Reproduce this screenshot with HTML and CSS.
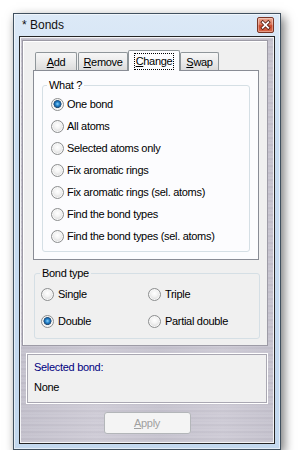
FILE: index.html
```html
<!DOCTYPE html>
<html>
<head>
<meta charset="utf-8">
<link rel="stylesheet" href="styles.css">
</head>
<body>
<div class="window">
  <div class="titlebar">
    <span class="title">* Bonds</span>
    <span class="close">
      <svg width="16" height="16" viewBox="0 0 16 16">
        <path d="M5 5 L11 11 M11 5 L5 11" stroke="#5a2418" stroke-width="3.6" stroke-linecap="square"/>
        <path d="M5 5 L11 11 M11 5 L5 11" stroke="#ffffff" stroke-width="1.8" stroke-linecap="square"/>
      </svg>
    </span>
  </div>
  <div class="client">
    <div class="top-panel">
      <div class="tabs">
        <div class="tab tab-add"><u>A</u>dd</div>
        <div class="tab tab-remove"><u>R</u>emove</div>
        <div class="tab tab-active"><span class="focus"><u>C</u>hange</span></div>
        <div class="tab tab-swap"><u>S</u>wap</div>
      </div>
      <div class="tab-page">
        <fieldset class="group what">
          <legend>What ?</legend>
          <div class="radio"><span class="dot checked"></span><span>One bond</span></div>
          <div class="radio"><span class="dot"></span><span>All atoms</span></div>
          <div class="radio"><span class="dot"></span><span>Selected atoms only</span></div>
          <div class="radio"><span class="dot"></span><span>Fix aromatic rings</span></div>
          <div class="radio"><span class="dot"></span><span>Fix aromatic rings (sel. atoms)</span></div>
          <div class="radio"><span class="dot"></span><span>Find the bond types</span></div>
          <div class="radio"><span class="dot"></span><span>Find the bond types (sel. atoms)</span></div>
        </fieldset>
      </div>
      <fieldset class="group bondtype">
        <legend>Bond type</legend>
        <div class="bond-grid">
          <div class="radio"><span class="dot"></span><span>Single</span></div>
          <div class="radio"><span class="dot"></span><span>Triple</span></div>
          <div class="radio"><span class="dot checked"></span><span>Double</span></div>
          <div class="radio"><span class="dot"></span><span>Partial double</span></div>
        </div>
      </fieldset>
    </div>
    <div class="info-panel">
      <div class="info-label">Selected bond:</div>
      <div class="info-value">None</div>
    </div>
    <div class="actions">
      <button class="apply" disabled><u>A</u>pply</button>
    </div>
  </div>
</div>
</body>
</html>
```

FILE: styles.css
```css
* { box-sizing: border-box; }

html, body {
  margin: 0;
  padding: 0;
  background: #ffffff;
}

body {
  font-family: "Liberation Sans", Arial, sans-serif;
  font-size: 11px;
  letter-spacing: -0.3px;
  color: #000;
}

.window {
  margin: 13px 0 0 13px;
  width: 268px;
  height: 437px;
  border: 1px solid #40505f;
  background: linear-gradient(180deg, #dce9f7 0%, #c9ddf1 30%, #c3d8ee 100%);
  box-shadow: 3px 4px 10px rgba(0, 0, 0, 0.55), inset 0 0 0 1px rgba(255, 255, 255, 0.55);
  padding: 0 5px 5px 5px;
  display: flex;
  flex-direction: column;
}

.titlebar {
  height: 22px;
  display: flex;
  align-items: flex-start;
  justify-content: space-between;
  flex: none;
}

.title {
  font-size: 12px;
  letter-spacing: 0;
  padding: 4px 0 0 3px;
  color: #111;
}

.close {
  margin-top: 3px;
  margin-right: 1px;
  width: 17px;
  height: 16px;
  border: 1px solid #7a3626;
  border-radius: 2px;
  background: linear-gradient(180deg, #eba690 0%, #dc7a5f 45%, #c9472a 55%, #d9694a 100%);
  box-shadow: inset 0 0 0 1px rgba(255, 255, 255, 0.35);
  display: flex;
  align-items: center;
  justify-content: center;
}

.close svg { display: block; }

.client {
  flex: 1;
  border: 1px solid #252525;
  box-shadow: inset 0 0 0 1px #f4f4f6;
  background:
    repeating-linear-gradient(180deg,
      rgba(255,255,255,0.00) 0px,
      rgba(255,255,255,0.18) 1px,
      rgba(255,255,255,0.00) 2px,
      rgba(0,0,0,0.03) 3px,
      rgba(255,255,255,0.10) 5px,
      rgba(255,255,255,0.00) 7px),
    linear-gradient(90deg, #c2bfcb 0%, #cdcad5 30%, #c4c1cd 55%, #ccc9d4 80%, #c3c0cc 100%);
  padding: 3px 0 0 2px;
  display: flex;
  flex-direction: column;
}

.top-panel {
  width: 246px;
  height: 306px;
  background: #f0f0f0;
  border: 1px solid #9d9ba6;
  box-shadow: inset 1px 1px 0 #ffffff;
  padding: 9px 0 0 10px;
  display: flex;
  flex-direction: column;
}

.tabs {
  display: flex;
  align-items: flex-end;
  height: 21px;
  margin-bottom: -1px;
  position: relative;
  z-index: 1;
}

.tab {
  height: 18px;
  border: 1px solid #8f969a;
  border-bottom: none;
  border-radius: 2px 2px 0 0;
  background: linear-gradient(180deg, #f7f7f7 0%, #ebebeb 50%, #dcdcdc 100%);
  display: flex;
  align-items: center;
  justify-content: center;
  margin-bottom: 1px;
}

.tab-add { width: 42px; margin-left: 2px; }
.tab-remove { width: 50px; margin-left: 1px; }
.tab-swap { width: 39px; margin-left: 0; }

.tab-active {
  width: 52px;
  height: 21px;
  background: #fcfcfe;
  margin-bottom: 0;
  margin-left: 0;
}

.focus {
  border: 1px dotted #000;
  padding: 1px 1px 2px 1px;
  line-height: 12px;
}

.tab-page {
  width: 226px;
  height: 190px;
  border: 1px solid #898c95;
  background: #fcfcfe;
  padding: 8px 0 0 8px;
}

.group {
  margin: 0;
  border: 1px solid #d5dfe5;
  border-radius: 3px;
  min-width: 0;
}

.group legend {
  padding: 0 2px;
  line-height: 13px;
  color: #000;
}

.what {
  width: 208px;
  height: 173px;
  padding: 1px 0 0 8px;
}

.what legend { margin-left: -4px; }

.radio {
  height: 22px;
  display: flex;
  align-items: center;
  gap: 3px;
  white-space: nowrap;
}

.dot {
  flex: none;
  width: 13px;
  height: 13px;
  border-radius: 50%;
  border: 1px solid #8c8e8f;
  background: radial-gradient(circle at 50% 40%, #ffffff 0px, #f4f4f4 3px, #dedede 6px, #e9e9e9 7px);
  box-shadow: inset 0 0 0 1px #f8f8f8;
}

.dot.checked {
  background: radial-gradient(circle at 50% 45%, #8fd4fb 0px, #2b8ad0 1.8px, #185f9f 3px, #2b4d6e 3.8px, #ececec 4.3px, #f6f6f6 6px);
}

.bondtype {
  width: 226px;
  height: 72px;
  margin: 7px 0 0 1px;
  padding: 3px 0 0 6px;
}

.bondtype legend { margin-left: -1px; }

.bond-grid {
  display: grid;
  grid-template-columns: 107px auto;
  row-gap: 5px;
}

.bond-grid .radio { gap: 4px; }

.info-panel {
  margin: 7px 0 0 4px;
  width: 242px;
  height: 51px;
  background: #f0f0f0;
  border: 1px solid #ffffff;
  box-shadow: inset 0 0 0 1px #a9a7b2;
  padding: 7px 0 0 7px;
  display: flex;
  flex-direction: column;
  gap: 7px;
}

.info-label { color: #000080; line-height: 13px; }
.info-value { line-height: 13px; }

.actions {
  display: flex;
  justify-content: center;
  padding: 8px 2px 0 0;
}

.apply {
  width: 87px;
  height: 22px;
  border: 1px solid #b3b6b9;
  border-radius: 3px;
  background: #f4f4f4;
  color: #a0a0a0;
  font-family: "Liberation Sans", Arial, sans-serif;
  font-size: 11px;
  letter-spacing: -0.3px;
  padding: 0;
}
```
